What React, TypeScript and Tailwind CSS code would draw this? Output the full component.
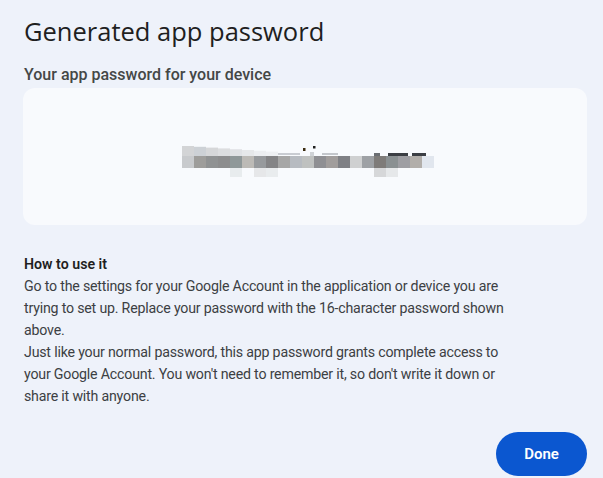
import React from 'react';

const ROW_TOP = ['#d3d4d6', '#cdd1d6', '#d6d7d9', '#dcdddf', '#e0e2e5', '#e6e8ea', '#eceef1', '#eef0f3'];
const ROW_MID = [
  '#c8cacd', '#9e9d9b', '#909293', '#8d8d8e', '#8f9899', '#bcbab6', '#979a9d',
  '#848486', '#a6a6a6', '#b7bbc1', '#bfc1c0', '#8f8f93', '#a19d9c', '#7f8085',
  '#cfd0d1', '#9ea1a5', '#7e7b79', '#8a9092', '#9e9ea3', '#b2aeaa', '#e1e6ee',
];
const ROW_LOW: [number, string][] = [
  [4, '#e8ecee'], [6, '#e6e7e9'], [7, '#e9ecee'], [16, '#d6d7d9'], [17, '#e6e8ea'],
];

function BlurredPassword() {
  return (
    <svg width="252" height="34" viewBox="0 0 252 34" className="block">
      {ROW_TOP.map((c, i) => (
        <rect key={'t' + i} x={i * 12} y={2 + i * 0.8} width="12" height={10 - i * 0.8} fill={c} />
      ))}
      {/* remains of the text peeking above the pixelation */}
      <rect x="96" y="9" width="22" height="2" fill="#c9ccd2" />
      <rect x="121" y="4" width="2.5" height="3" fill="#3a2a10" />
      <rect x="131" y="2" width="2.5" height="2.5" fill="#1f1f1f" />
      <rect x="128" y="8" width="4" height="4" fill="#cfd2d6" />
      <rect x="140" y="9" width="16" height="2" fill="#c4c7cc" />
      <rect x="192" y="9" width="6" height="3" fill="#6b6e73" />
      <rect x="206" y="9" width="20" height="3" fill="#3b3e44" />
      <rect x="230" y="9" width="14" height="3" fill="#3b3e44" />
      {ROW_MID.map((c, i) => (
        <rect key={'m' + i} x={i * 12} y="12" width="12" height="12" fill={c} />
      ))}
      {ROW_LOW.map(([i, c]) => (
        <rect key={'l' + i} x={i * 12} y="24" width="12" height="9" fill={c} />
      ))}
    </svg>
  );
}

export default function App() {
  return (
    <div className="w-[603px] h-[478px] overflow-hidden bg-[#eef2fa] text-[#1f1f1f] flex flex-col" style={{ fontFamily: 'Roboto, "Liberation Sans", sans-serif' }}>
      <h1 className="pl-6 pt-[13px] text-[25.5px] leading-[36px] text-[#1f1f1f]" style={{ fontFamily: '"Open Sans", Roboto, sans-serif' }}>
        Generated app password
      </h1>
      <h2 className="pl-6 mt-[16px] text-[16px] leading-[20px] font-medium text-[#444746]">
        Your app password for your device
      </h2>
      <div className="ml-[23px] mr-4 mt-[3px] h-[137px] rounded-[12px] bg-[#f8fafd] flex items-center justify-center">
        <div className="ml-[6px] mt-[9px]">
          <BlurredPassword />
        </div>
      </div>
      <div className="pl-6 w-[504px] mt-[28px] text-[14.2px] tracking-[-0.2px] leading-[22px] text-[#3c4043]">
        <p className="font-semibold text-[#1f1f1f] tracking-normal">How to use it</p>
        <p>
          Go to the settings for your Google Account in the application or device you are trying to set up. Replace your password with the 16-character password shown above.
        </p>
        <p>
          Just like your normal password, this app password grants complete access to your Google Account. You won't need to remember it, so don't write it down or share it with anyone.
        </p>
      </div>
      <div className="flex justify-end pr-4 mt-auto pb-[2px]">
        <button className="w-[91px] h-[44px] rounded-full bg-[#0b57d0] text-white text-[15px] font-semibold">
          Done
        </button>
      </div>
    </div>
  );
}
